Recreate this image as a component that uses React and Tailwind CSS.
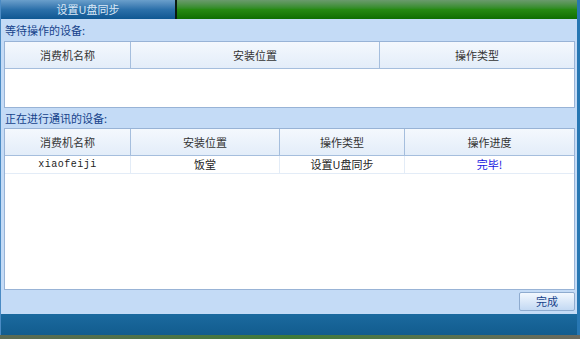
import React from "react";

const cjk = { fontFamily: '"Noto Sans CJK SC", "Liberation Sans", sans-serif' };

const waitCols = [
  { w: "w-[126px]", label: "消费机名称" },
  { w: "w-[249px]", label: "安装位置" },
  { w: "flex-1", label: "操作类型" },
];

const runCols = [
  { w: "w-[126px]", label: "消费机名称" },
  { w: "w-[149px]", label: "安装位置" },
  { w: "w-[125px]", label: "操作类型" },
  { w: "flex-1", label: "操作进度" },
];

const rows = [{ name: "xiaofeiji", place: "饭堂", type: "设置U盘同步", progress: "完毕!" }];

const HeaderRow = ({ cols }) => (
  <div className="flex h-[27px] border-b border-[#a5bedd] bg-gradient-to-b from-[#f4f8fd] to-[#e3edf9]">
    {cols.map((c, i) => (
      <div
        key={c.label}
        className={`${c.w} flex items-center justify-center text-[11px] text-[#333] ${
          i < cols.length - 1 ? "border-r border-[#a5bedd]" : ""
        }`}
      >
        {c.label}
      </div>
    ))}
  </div>
);

export default function App() {
  return (
    <div className="w-[580px] h-[339px] flex flex-col overflow-hidden bg-[#c4dbf6]" style={cjk}>
      <div className="flex flex-1 min-h-0">
        <div className="flex flex-col flex-1 border-l border-[#4b8bc4]">
          {/* top tab bar */}
          <div className="flex h-[19px] shrink-0">
            <div className="w-[174px] flex items-center justify-center text-[11px] text-[#dbe9f7] bg-gradient-to-b from-[#6a9fcb] via-[#2b70aa] to-[#0d5792]">
              设置U盘同步
            </div>
            <div className="w-[2px] bg-[#0b1a10]" />
            <div className="flex-1 bg-gradient-to-b from-[#6a9a6c] via-[#268a12] to-[#0e6e02]" />
          </div>

          {/* body */}
          <div className="flex flex-col flex-1 pl-[3px] pr-[2px]">
            <div className="h-[22px] flex items-center pl-[1px] text-[11px] text-[#15428b]">等待操作的设备:</div>
            <div className="h-[67px] flex flex-col border border-[#98b3d6] bg-white">
              <HeaderRow cols={waitCols} />
            </div>

            <div className="h-[20px] flex items-center pl-[1px] text-[11px] text-[#15428b]">正在进行通讯的设备:</div>
            <div className="h-[162px] flex flex-col border border-[#98b3d6] bg-white">
              <HeaderRow cols={runCols} />
              {rows.map((r) => (
                <div key={r.name} className="flex h-[18px] border-b border-[#e3ecf7] text-[11px] text-[#222]">
                  <div
                    className="w-[126px] flex items-center justify-center border-r border-[#e3ecf7] text-[10px] tracking-[0.5px]"
                    style={{ fontFamily: '"Liberation Mono", monospace' }}
                  >
                    {r.name}
                  </div>
                  <div className="w-[149px] flex items-center justify-center border-r border-[#e3ecf7]">{r.place}</div>
                  <div className="w-[125px] flex items-center justify-center border-r border-[#e3ecf7]">{r.type}</div>
                  <div className="flex-1 flex items-center justify-center text-[#1515e0]">{r.progress}</div>
                </div>
              ))}
            </div>

            <div className="flex justify-end pt-[2px]">
              <button className="w-[56px] h-[19px] rounded-[2px] border border-[#8eabcf] bg-gradient-to-b from-[#f3f8fe] to-[#c3d9f3] text-[11px] text-[#15428b] flex items-center justify-center">
                完成
              </button>
            </div>
          </div>

          {/* footer bar */}
          <div className="h-[21px] shrink-0 bg-gradient-to-b from-[#1b6a9f] to-[#125c8e]" />
        </div>
        <div className="w-[3px] bg-[#2777b3]" />
      </div>
      <div className="h-[4px] shrink-0 bg-gradient-to-r from-[#5b6a55] via-[#3f7a3a] to-[#6a6a60]" />
    </div>
  );
}
